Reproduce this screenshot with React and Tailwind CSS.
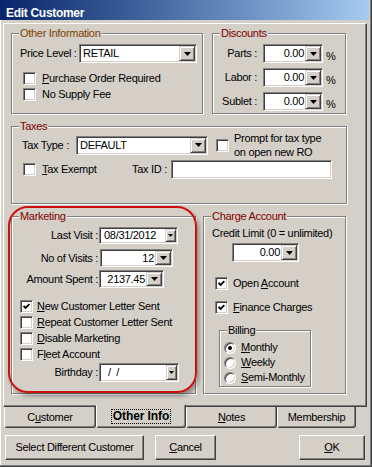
import React from 'react'

const sunken = 'border border-t-[#808080] border-l-[#808080] border-r-white border-b-white shadow-[inset_1px_1px_0_#404040,inset_-1px_-1px_0_#d4d0c8]'
const raised = 'border border-t-white border-l-white border-r-[#404040] border-b-[#404040] shadow-[inset_-1px_-1px_0_#808080]'
const btnFace = 'border border-t-[#d4d0c8] border-l-[#d4d0c8] border-r-[#404040] border-b-[#404040] shadow-[inset_1px_1px_0_#fff,inset_-1px_-1px_0_#808080]'

function Group({ label, color = 'text-[#800000]', className, children }) {
  return (
    <div className={`relative border border-[#808080] shadow-[inset_1px_1px_0_#fff,1px_1px_0_#fff] ${className}`}>
      <span className={`absolute -top-[7px] left-[7px] px-[1px] bg-[#d4d0c8] ${color}`}>{label}</span>
      {children}
    </div>
  )
}

function DropBtn({ small }) {
  return (
    <div className={`flex items-center justify-center bg-[#d4d0c8] ${btnFace} ${small ? 'w-[11px]' : 'w-[16px]'}`}>
      {small ? (
        <svg width="5" height="3" viewBox="0 0 5 3"><polygon points="0,0 5,0 2.5,3" fill="#000" /></svg>
      ) : (
        <svg width="7" height="4" viewBox="0 0 7 4"><polygon points="0,0 7,0 3.5,4" fill="#000" /></svg>
      )}
    </div>
  )
}

function Combo({ className, value, right, small, pad = 'pl-[1px]' }) {
  return (
    <div className={`flex items-stretch bg-white p-[1px] ${sunken} ${className}`}>
      <div className={`flex-1 flex items-center whitespace-pre ${right ? 'justify-end pr-[1px]' : pad}`}>{value}</div>
      <DropBtn small={small} />
    </div>
  )
}

function Check({ checked, children, className = '', gap = 'ml-[5px]', h = 'h-[16px]' }) {
  return (
    <div className={`flex items-center ${h} ${className}`}>
      <span className={`w-[13px] h-[13px] shrink-0 bg-white p-[1px] flex items-center justify-center ${sunken}`}>
        {checked && (
          <svg width="7" height="7" viewBox="0 0 7 7">
            <polyline points="0.6,3 2.6,5 6.4,1.2" fill="none" stroke="#000" strokeWidth="1.8" />
          </svg>
        )}
      </span>
      <span className={gap}>{children}</span>
    </div>
  )
}

function Radio({ checked, children }) {
  return (
    <div className="flex items-center h-[15px]">
      <span className="w-[12px] h-[12px] shrink-0 rounded-full bg-white border border-t-[#808080] border-l-[#808080] border-r-white border-b-white shadow-[inset_1px_1px_0_#404040,inset_-1px_-1px_0_#d4d0c8] flex items-center justify-center">
        {checked && <span className="w-[4px] h-[4px] rounded-full bg-black" />}
      </span>
      <span className="ml-[5px]">{children}</span>
    </div>
  )
}

function Tab({ children, className, selected }) {
  return (
    <div className={`flex items-center justify-center bg-[#d4d0c8] border-l border-l-white border-r border-r-[#404040] border-b border-b-[#404040] shadow-[inset_-1px_-1px_0_#808080] rounded-b-[3px] ${selected ? 'relative z-10 -mt-[2px] h-[23px]' : 'h-[21px]'} ${className}`}>
      {children}
    </div>
  )
}

export default function App() {
  return (
    <div className="relative w-[372px] h-[467px] overflow-hidden bg-[#d4d0c8] font-['Liberation_Sans',Arial,sans-serif] text-[11px] leading-[13px] tracking-[-0.3px] text-black shadow-[inset_-1px_-1px_0_#404040,inset_-2px_-2px_0_#808080,inset_1px_0_0_#fff]">
      <div className="h-[20px] w-[369px] bg-linear-to-r from-[#0a246a] to-[#a6caf0] pl-[6px] pt-[7px] text-white font-bold text-[12px] leading-[12px]">
        Edit Customer
      </div>

      <div className="ml-[3px] mt-[3px] w-[364px] h-[384px] border-t border-l border-t-white border-l-white border-r border-b border-r-[#404040] border-b-[#404040] shadow-[inset_-1px_-1px_0_#808080]">
        <div className="flex mt-[9px] ml-[7px]">
          <Group label="Other Information" color="text-[#7f3f00]" className="w-[192px] h-[81px]">
            <div className="flex items-center mt-[10px] ml-[8px]">
              <span className="w-[59px]">Price Level :</span>
              <Combo className="w-[118px] h-[19px]" value="RETAIL" pad="pl-[2px]" />
            </div>
            <div className="mt-[7px] ml-[11px]">
              <Check gap="ml-[6px]"><u>P</u>urchase Order Required</Check>
              <Check gap="ml-[6px]">No Supply Fee</Check>
            </div>
          </Group>
          <Group label="Discounts" className="ml-[9px] w-[134px] h-[81px]">
            {['Parts :', 'Labor :', 'Sublet :'].map((l, i) => (
              <div key={l} className={`flex items-center h-[19px] ${i === 0 ? 'mt-[10px]' : 'mt-[5px]'}`}>
                <span className="w-[44px] text-right">{l}</span>
                <Combo className="ml-[6px] w-[60px] h-[19px]" value="0.00" right />
                <span className="ml-[3px] self-end">%</span>
              </div>
            ))}
          </Group>
        </div>

        <Group label="Taxes" className="mt-[12px] ml-[7px] w-[336px] h-[78px]">
          <div className="flex items-center mt-[4px] ml-[10px]">
            <span className="w-[54px]">Tax Type :</span>
            <Combo className="w-[132px] h-[19px]" value="DEFAULT" pad="pl-[2px]" />
            <Check className="ml-[8px]" h="h-[28px]" gap="ml-[5px] leading-[14px]">
              Prompt for tax type<br />on open new RO
            </Check>
          </div>
          <div className="flex items-center h-[19px] mt-[1px] ml-[11px]">
            <div className="w-[109px]">
              <Check gap="ml-[6px]"><u>T</u>ax Exempt</Check>
            </div>
            <span className="w-[39px]">Tax ID :</span>
            <div className={`w-[161px] h-[19px] bg-white ${sunken}`} />
          </div>
        </Group>

        <div className="flex mt-[12px] ml-[7px]">
          <Group label="Marketing" className="w-[185px] h-[178px]">
            <div className="flex items-center mt-[10px]">
              <span className="w-[86px] text-right">Last Visit :</span>
              <Combo className="ml-[1px] w-[79px] h-[17px]" value="08/31/2012" small pad="pl-[3px]" />
            </div>
            <div className="flex items-center mt-[5px]">
              <span className="w-[86px] text-right">No of Visits :</span>
              <Combo className="ml-[2px] w-[73px] h-[18px]" value="12" right />
            </div>
            <div className="flex items-center mt-[3px]">
              <span className="w-[86px] text-right">Amount Spent :</span>
              <Combo className="ml-[1px] w-[65px] h-[18px]" value="2137.45" right />
            </div>
            <div className="mt-[10px] ml-[8px]">
              <Check checked gap="ml-[4px]"><u>N</u>ew Customer Letter Sent</Check>
              <Check gap="ml-[4px]"><u>R</u>epeat Customer Letter Sent</Check>
              <Check gap="ml-[4px]"><u>D</u>isable Marketing</Check>
              <Check gap="ml-[4px]">F<u>l</u>eet Account</Check>
            </div>
            <div className="flex items-center mt-[1px]">
              <span className="w-[86px] text-right">Birthday :</span>
              <Combo className="ml-[1px] w-[80px] h-[19px]" value={'/\u00a0\u00a0/'} small pad="pl-[7px]" />
            </div>
          </Group>

          <Group label="Charge Account" className="ml-[7px] w-[143px] h-[178px]">
            <div className="mt-[10px] ml-[8px]">Credit Limit (0 = unlimited)</div>
            <Combo className="mt-[3px] ml-[28px] w-[67px] h-[19px]" value="0.00" right />
            <Check checked className="mt-[13px] ml-[11px]">Open <u>A</u>ccount</Check>
            <Check checked className="mt-[8px] ml-[11px]"><u>F</u>inance Charges</Check>
            <Group label="Billing" color="text-black" className="mt-[15px] ml-[15px] w-[92px] h-[57px]">
              <div className="mt-[9px] ml-[4px]">
                <Radio checked><u>M</u>onthly</Radio>
                <Radio><u>W</u>eekly</Radio>
                <Radio><u>S</u>emi-Monthly</Radio>
              </div>
            </Group>
          </Group>
        </div>
      </div>

      <div className="flex items-start ml-[4px] h-[21px]">
        <Tab className="w-[92px]">C<u>u</u>stomer</Tab>
        <Tab selected className="w-[90px]">
          <span className="font-bold text-[12px] tracking-[-0.1px] px-[1px] outline outline-1 outline-dotted outline-black">Other Info</span>
        </Tab>
        <Tab className="w-[91px]"><u>N</u>otes</Tab>
        <Tab className="w-[79px]">Membership</Tab>
      </div>

      <div className="flex mt-[7px] ml-[5px] mr-[7px] h-[25px]">
        <button className={`w-[139px] h-[25px] bg-[#d4d0c8] ${raised}`}>Select Different Customer</button>
        <button className={`ml-[11px] w-[61px] h-[25px] bg-[#d4d0c8] ${raised}`}><u>C</u>ancel</button>
        <button className={`ml-auto w-[66px] h-[25px] bg-[#d4d0c8] ${raised}`}><u>O</u>K</button>
      </div>

      <div className="absolute left-[8px] top-[206px] w-[189px] h-[187px] rounded-[20px] border-2 border-[#cc1111] shadow-[2px_3px_4px_rgba(0,0,0,0.35)] pointer-events-none" />
    </div>
  )
}
